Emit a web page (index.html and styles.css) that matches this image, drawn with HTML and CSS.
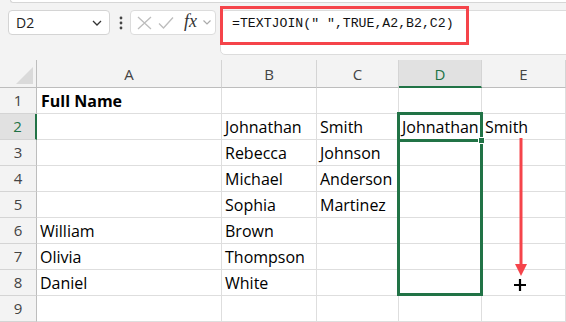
FILE: index.html
```html
<!DOCTYPE html>
<html lang="en">
<head>
    <meta charset="UTF-8">
    <title>TEXTJOIN - Full Name</title>
    <link rel="stylesheet" href="styles.css">
</head>
<body>
    <div class="ribbon-edge"></div>

    <div class="toolbar">
        <div class="namebox">
            <span>D2</span>
            <svg class="chev" width="10" height="6" viewBox="0 0 10 6"><path d="M1 1 L5 5 L9 1" fill="none" stroke="#333" stroke-width="1.3"/></svg>
        </div>
        <svg class="dots" width="4" height="14" viewBox="0 0 4 14"><circle cx="2" cy="2" r="1.4" fill="#444"/><circle cx="2" cy="7" r="1.4" fill="#444"/><circle cx="2" cy="12" r="1.4" fill="#444"/></svg>
        <div class="fxbox">
            <svg width="15" height="14" viewBox="0 0 15 14"><path d="M1 1 L14 13 M14 1 L1 13" fill="none" stroke="#bdbdbd" stroke-width="1.3"/></svg>
            <svg width="16" height="14" viewBox="0 0 16 14"><path d="M1 7.5 L5.5 12 L15 1.5" fill="none" stroke="#bdbdbd" stroke-width="1.3"/></svg>
            <span class="fx">fx</span>
            <svg width="8" height="5" viewBox="0 0 8 5"><path d="M0.5 0.5 L4 4 L7.5 0.5" fill="none" stroke="#aaa" stroke-width="1.2"/></svg>
        </div>
        <div class="formula">
            <span class="formula-text">=TEXTJOIN(" ",TRUE,A2,B2,C2)</span>
            <div class="callout"></div>
        </div>
    </div>

    <div class="sheet">
        <div class="grid">
            <div class="corner"><span class="tri"></span></div>
            <div class="colhead">A</div>
            <div class="colhead">B</div>
            <div class="colhead">C</div>
            <div class="colhead active">D</div>
            <div class="colhead">E</div>

            <div class="rowhead">1</div>
            <div class="cell bold">Full Name</div><div class="cell"></div><div class="cell"></div><div class="cell"></div><div class="cell"></div>

            <div class="rowhead active">2</div>
            <div class="cell"></div><div class="cell">Johnathan</div><div class="cell">Smith</div><div class="cell">Johnathan</div><div class="cell">Smith</div>

            <div class="rowhead">3</div>
            <div class="cell"></div><div class="cell">Rebecca</div><div class="cell">Johnson</div><div class="cell"></div><div class="cell"></div>

            <div class="rowhead">4</div>
            <div class="cell"></div><div class="cell">Michael</div><div class="cell">Anderson</div><div class="cell"></div><div class="cell"></div>

            <div class="rowhead">5</div>
            <div class="cell"></div><div class="cell">Sophia</div><div class="cell">Martinez</div><div class="cell"></div><div class="cell"></div>

            <div class="rowhead">6</div>
            <div class="cell">William</div><div class="cell">Brown</div><div class="cell"></div><div class="cell"></div><div class="cell"></div>

            <div class="rowhead">7</div>
            <div class="cell">Olivia</div><div class="cell">Thompson</div><div class="cell"></div><div class="cell"></div><div class="cell"></div>

            <div class="rowhead">8</div>
            <div class="cell">Daniel</div><div class="cell">White</div><div class="cell"></div><div class="cell"></div><div class="cell"></div>

            <div class="rowhead">9</div>
            <div class="cell"></div><div class="cell"></div><div class="cell"></div><div class="cell"></div><div class="cell"></div>
        </div>

        <!-- annotations on top of the grid -->
        <div class="range-box"></div>
        <div class="active-line"></div>
        <div class="fill-handle"></div>
        <svg class="arrow" width="14" height="140" viewBox="0 0 14 140">
            <line x1="7" y1="0" x2="7" y2="128" stroke="#f5444a" stroke-width="3"/>
            <path d="M1 126 L13 126 L7 138 Z" fill="#f5444a"/>
        </svg>
        <svg class="cursor" width="14" height="14" viewBox="0 0 14 14">
            <path d="M7 1 V13 M1 7 H13" stroke="#000" stroke-width="2.2"/>
        </svg>
    </div>
</body>
</html>
```

FILE: styles.css
```css
* {
    margin: 0;
    padding: 0;
    box-sizing: border-box;
}

body {
    width: 566px;
    height: 322px;
    overflow: hidden;
    background: #f3f3f3;
    font-family: 'Open Sans', 'Liberation Sans', sans-serif;
    position: relative;
}

.ribbon-edge {
    height: 3px;
    margin-left: 10px;
    background: white;
    border-bottom: 1px solid #d6d6d6;
    border-left: 1px solid #d6d6d6;
    border-bottom-left-radius: 4px;
}

.toolbar {
    height: 57px;
    display: flex;
    align-items: flex-start;
    padding-top: 7px;
    padding-left: 8px;
}

.namebox {
    width: 102px;
    height: 25px;
    background: white;
    border: 1px solid #d4d4d4;
    border-radius: 4px;
    display: flex;
    align-items: center;
    justify-content: space-between;
    padding: 0 7px 0 7px;
    font-size: 14px;
    color: #222;
}

.dots {
    margin: 6px 0 0 9px;
}

.fxbox {
    margin-left: 7px;
    width: 86px;
    height: 25px;
    background: white;
    border: 1px solid #dcdcdc;
    border-radius: 4px;
    display: flex;
    align-items: center;
    gap: 6px;
    padding-left: 6px;
}

.fx {
    font-family: 'Liberation Serif', serif;
    font-style: italic;
    font-size: 18px;
    color: #333;
    margin-left: 4px;
    margin-top: -2px;
}

.formula {
    position: relative;
    margin-left: 4px;
    flex: 1;
    margin-right: -8px;
    height: 45px;
    background: white;
    border: 1px solid #dcdcdc;
    border-radius: 5px;
    padding-left: 11px;
}

.formula-text {
    display: block;
    font-family: 'Liberation Mono', monospace;
    font-size: 13.2px;
    line-height: 25px;
    color: #111;
    white-space: nowrap;
}

.callout {
    position: absolute;
    left: -1px;
    top: -5px;
    width: 249px;
    height: 39px;
    border: 3px solid #f5444a;
}

.sheet {
    position: relative;
}

.grid {
    display: grid;
    grid-template-columns: 37px 185px 95px 82px 83px 84px;
    grid-template-rows: 28px repeat(9, 26px);
    background: white;
}

.corner {
    background: #f3f3f3;
    border-right: 1px solid #bdbdbd;
    border-bottom: 1px solid #bdbdbd;
    position: relative;
}

.corner .tri {
    position: absolute;
    right: 3px;
    bottom: 3px;
    width: 0;
    height: 0;
    border-left: 17px solid transparent;
    border-bottom: 17px solid #dadada;
}

.colhead {
    background: #f3f3f3;
    border-right: 1px solid #d4d4d4;
    border-bottom: 1px solid #bdbdbd;
    text-align: center;
    font-size: 15px;
    color: #444;
    padding-top: 4px;
}

.colhead.active {
    background: #e1e1e1;
    border-bottom: 2px solid #217346;
    color: #217346;
}

.rowhead {
    background: #f3f3f3;
    border-right: 1px solid #bdbdbd;
    border-bottom: 1px solid #d4d4d4;
    text-align: center;
    font-size: 15px;
    line-height: 25px;
    color: #444;
}

.rowhead.active {
    background: #e1e1e1;
    border-right: 2px solid #217346;
    color: #217346;
}

.cell {
    border-right: 1px solid #dedede;
    border-bottom: 1px solid #dedede;
    padding: 1px 0 0 3px;
    font-size: 16px;
    line-height: 24px;
    color: #000;
    white-space: nowrap;
    overflow: hidden;
}

.cell.bold {
    font-weight: 700;
    padding-left: 4px;
}

.range-box {
    position: absolute;
    left: 397px;
    top: 52px;
    width: 86px;
    height: 184px;
    border: 3px solid #217346;
}

.active-line {
    position: absolute;
    left: 397px;
    top: 79px;
    width: 86px;
    height: 3px;
    background: #217346;
}

.fill-handle {
    position: absolute;
    left: 478px;
    top: 77px;
    width: 7px;
    height: 7px;
    background: #217346;
    border: 1px solid white;
}

.arrow {
    position: absolute;
    left: 514px;
    top: 78px;
}

.cursor {
    position: absolute;
    left: 513px;
    top: 218px;
}
```
